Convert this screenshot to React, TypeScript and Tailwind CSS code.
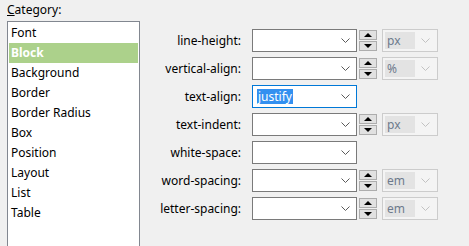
import React from 'react';

const categories = ['Font', 'Block', 'Background', 'Border', 'Border Radius', 'Box', 'Position', 'Layout', 'List', 'Table'];

type Row = {
  label: string;
  value?: string;
  unit?: string;
  spin?: boolean;
  focused?: boolean;
};

const rows: Row[] = [
  { label: 'line-height:', spin: true, unit: 'px' },
  { label: 'vertical-align:', spin: true, unit: '%' },
  { label: 'text-align:', value: 'justify', focused: true },
  { label: 'text-indent:', spin: true, unit: 'px' },
  { label: 'white-space:' },
  { label: 'word-spacing:', spin: true, unit: 'em' },
  { label: 'letter-spacing:', spin: true, unit: 'em' },
];

function Chevron({ color }: { color: string }) {
  return (
    <svg width="9" height="5" viewBox="0 0 9 5" className="shrink-0">
      <polyline points="0.5,0.5 4.5,4.5 8.5,0.5" fill="none" stroke={color} strokeWidth="1" />
    </svg>
  );
}

function Spinner() {
  return (
    <div className="ml-[2px] flex h-[23px] w-[18px] flex-col justify-between py-[1px]">
      <div className="flex h-[10px] items-center justify-center border border-[#adadad] bg-[#e1e1e1]">
        <svg width="8" height="4" viewBox="0 0 8 4">
          <polygon points="0,4 4,0 8,4" fill="#000" />
        </svg>
      </div>
      <div className="flex h-[10px] items-center justify-center border border-[#adadad] bg-[#e1e1e1]">
        <svg width="8" height="4" viewBox="0 0 8 4">
          <polygon points="0,0 8,0 4,4" fill="#000" />
        </svg>
      </div>
    </div>
  );
}

function UnitBox({ unit }: { unit: string }) {
  return (
    <div className="ml-[5px] flex h-[23px] w-[56px] items-center border border-[#cccccc] bg-[#f4f4f4] pl-[2px] pr-[7px]">
      <div className="flex h-[17px] w-[30px] items-center bg-[#e3e3e3] pl-[2px] text-[#6d7a8c]">{unit}</div>
      <div className="flex-1" />
      <Chevron color="#c2c2c2" />
    </div>
  );
}

export default function App() {
  return (
    <div
      className="flex h-[246px] w-[469px] overflow-hidden bg-[#f0f0f0] text-[12px] text-black"
      style={{ fontFamily: '"Noto Sans", "Liberation Sans", sans-serif' }}
    >
      <div className="w-[140px] shrink-0 pl-[7px]">
        <div className="h-[21px] pt-[1px] leading-[17px]">
          <span className="underline">C</span>ategory:
        </div>
        <div className="h-[240px] w-[133px] border border-[#828790] bg-white pt-[1px]">
          {categories.map((c) => (
            <div
              key={c}
              className={
                c === 'Block'
                  ? 'mx-[1px] flex h-[20px] items-center bg-[#acd18b] pl-[2px] font-bold text-white'
                  : 'mx-[1px] flex h-[20px] items-center pl-[2px]'
              }
            >
              {c}
            </div>
          ))}
        </div>
      </div>

      <div className="flex flex-col gap-[5px] pt-[29px]">
        {rows.map((r) => (
          <div key={r.label} className="flex h-[23px] items-center">
            <div className="w-[101px] text-right">{r.label}</div>
            <div
              className={
                r.focused
                  ? 'ml-[11px] flex h-[23px] w-[105px] items-center border border-[#0078d7] bg-white pl-[4px] pr-[6px]'
                  : 'ml-[11px] flex h-[23px] w-[105px] items-center border border-[#7a7a7a] bg-white pl-[4px] pr-[6px]'
              }
            >
              <div className="flex-1">
                {r.value && (
                  <span className="inline-block bg-[#3390f0] px-[1px] leading-[15px] text-white">{r.value}</span>
                )}
              </div>
              <Chevron color="#5a5a5a" />
            </div>
            {r.spin && <Spinner />}
            {r.unit && <UnitBox unit={r.unit} />}
          </div>
        ))}
      </div>
    </div>
  );
}
